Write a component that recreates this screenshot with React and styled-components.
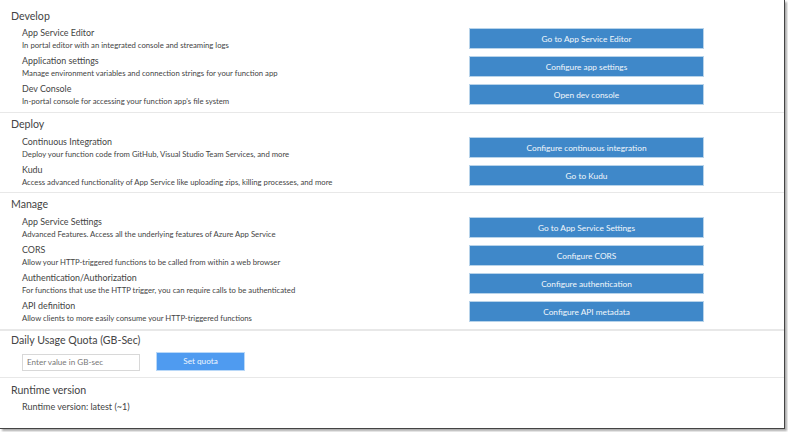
import React from "react";
import styled, { createGlobalStyle } from "styled-components";

const Global = createGlobalStyle`
  html, body { margin: 0; padding: 0; background: #fff; }
  body { width: 788px; height: 432px; overflow: hidden; font-family: Lato, "Noto Sans", sans-serif; }
`;

const Frame = styled.div`
  box-sizing: border-box;
  width: 785px;
  height: 429px;
  background: #fff;
  border-right: 1px solid #444;
  border-bottom: 1px solid #444;
  box-shadow: 2px 2px 2px #aaa;
  overflow: hidden;
`;

const Section = styled.section`
  box-sizing: border-box;
  height: ${(p) => p.$h}px;
  padding: ${(p) => p.$top}px 0 0 11px;
  border-bottom: ${(p) => (p.$last ? "0" : `${p.$line || 1}px solid #e8e8e8`)};
`;

const Title = styled.h2`
  margin: 0;
  font-size: 10.6px;
  line-height: 16px;
  font-weight: 400;
  color: #444;
`;

const Rows = styled.div`
  display: flex;
  flex-direction: column;
  gap: 8px;
  margin-top: ${(p) => p.$top}px;
  padding-left: 11px;
`;

const Row = styled.div`
  display: grid;
  grid-template-columns: 447px 235px;
  height: 20px;
  align-items: start;
`;

const Copy = styled.div`
  display: flex;
  flex-direction: column;
`;

const Name = styled.div`
  font-size: 8.9px;
  line-height: 14px;
  color: #444;
`;

const Desc = styled.div`
  font-size: 7.73px;
  line-height: 11px;
  color: #444;
  white-space: nowrap;
`;

const Action = styled.button`
  box-sizing: border-box;
  width: 235px;
  height: 21px;
  margin-top: 2px;
  padding: 0;
  border: 1px solid #b7d3ea;
  background: #3f88c9;
  color: #f2f7fb;
  font: 400 8.3px Lato, "Noto Sans", sans-serif;
`;

const Quota = styled.div`
  display: flex;
  align-items: flex-end;
  margin: 4px 0 0 11px;
`;

const QuotaInput = styled.input`
  box-sizing: border-box;
  width: 118px;
  height: 17px;
  padding: 0 4px;
  border: 1px solid #d8d8d8;
  font: 400 8.1px Lato, "Noto Sans", sans-serif;
  color: #444;
  &::placeholder { color: #777; opacity: 1; }
`;

const QuotaButton = styled.button`
  box-sizing: border-box;
  width: 89px;
  height: 19px;
  margin-left: 16px;
  padding: 0 0 0;
  border: 1px solid #b9d8f8;
  background: #4f9bf0;
  color: #eef6fe;
  font: 400 8.2px Lato, "Noto Sans", sans-serif;
`;

const Version = styled.div`
  margin: 2px 0 0 11px;
  font-size: 9px;
  line-height: 13px;
  color: #444;
`;

const groups = [
  { title: "Develop", h: 113, top: 8, rowsTop: 2, rows: [
    ["App Service Editor", "In portal editor with an integrated console and streaming logs", "Go to App Service Editor"],
    ["Application settings", "Manage environment variables and connection strings for your function app", "Configure app settings"],
    ["Dev Console", "In-portal console for accessing your function app's file system", "Open dev console"],
  ]},
  { title: "Deploy", h: 80, top: 3, rowsTop: 3, rows: [
    ["Continuous Integration", "Deploy your function code from GitHub, Visual Studio Team Services, and more", "Configure continuous integration"],
    ["Kudu", "Access advanced functionality of App Service like uploading zips, killing processes, and more", "Go to Kudu"],
  ]},
  { title: "Manage", h: 137.5, line: 2, top: 3, rowsTop: 3, rows: [
    ["App Service Settings", "Advanced Features. Access all the underlying features of Azure App Service", "Go to App Service Settings"],
    ["CORS", "Allow your HTTP-triggered functions to be called from within a web browser", "Configure CORS"],
    ["Authentication/Authorization", "For functions that use the HTTP trigger, you can require calls to be authenticated", "Configure authentication"],
    ["API definition", "Allow clients to more easily consume your HTTP-triggered functions", "Configure API metadata"],
  ]},
];

export default function App() {
  return (
    <>
      <Global />
      <Frame>
        {groups.map((g) => (
          <Section key={g.title} $h={g.h} $top={g.top} $line={g.line}>
            <Title>{g.title}</Title>
            <Rows $top={g.rowsTop}>
              {g.rows.map(([name, desc, action]) => (
                <Row key={name}>
                  <Copy>
                    <Name>{name}</Name>
                    <Desc>{desc}</Desc>
                  </Copy>
                  <Action>{action}</Action>
                </Row>
              ))}
            </Rows>
          </Section>
        ))}
        <Section $h={47} $top={1}>
          <Title>Daily Usage Quota (GB-Sec)</Title>
          <Quota>
            <QuotaInput placeholder="Enter value in GB-sec" />
            <QuotaButton>Set quota</QuotaButton>
          </Quota>
        </Section>
        <Section $h={50} $top={4} $last>
          <Title>Runtime version</Title>
          <Version>Runtime version: latest (~1)</Version>
        </Section>
      </Frame>
    </>
  );
}
